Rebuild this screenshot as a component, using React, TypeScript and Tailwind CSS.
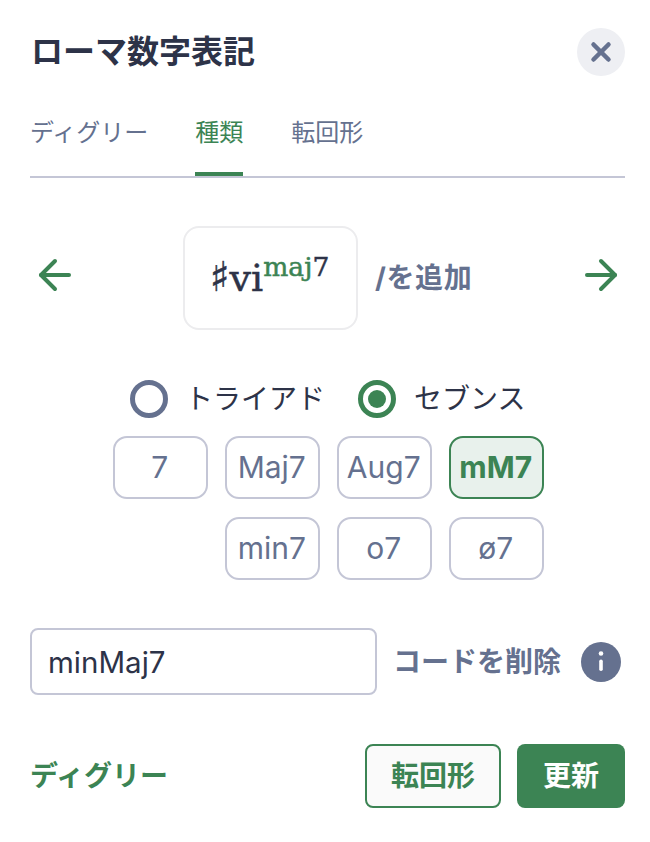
import { ArrowLeft, ArrowRight, X } from "lucide-react";

const chips = ["7", "Maj7", "Aug7", "mM7", "min7", "o7", "ø7"];

function Radio({ label, checked }: { label: string; checked?: boolean }) {
  return (
    <label className={checked ? "flex items-center gap-[18px]" : "flex items-center gap-[17px]"}>
      {checked ? (
        <span className="grid size-[38px] place-items-center rounded-full border-[5px] border-[#3c8454]">
          <span className="size-[18px] rounded-full bg-[#3c8454]" />
        </span>
      ) : (
        <span className="size-[38px] rounded-full border-[5px] border-[#65718f]" />
      )}
      <span className="text-[28px] leading-[40px] text-[#2d3348]">{label}</span>
    </label>
  );
}

export default function App() {
  return (
    <div className="h-[842px] w-[650px] bg-white pl-[30px] pr-[25px] font-['Inter','Noto_Sans_CJK_JP',sans-serif]">
      {/* Header */}
      <div className="flex items-center justify-between pl-[1px] pt-[28px]">
        <h1 className="text-[32px] font-bold leading-[48px] text-[#2d3348]">ローマ数字表記</h1>
        <button className="grid size-[48px] place-items-center rounded-full bg-[#eeeff3] text-[#65718f]">
          <X className="size-[30px]" strokeWidth={3.6} />
        </button>
      </div>

      {/* Tabs */}
      <div className="mt-[32px] flex border-b-2 border-[#c4c6d6] text-[24px] leading-[36px] text-[#65718f]">
        <div className="h-[68px] pt-[7px]">ディグリー</div>
        <div className="ml-[47px] h-[68px] border-b-4 border-[#3c8454] pt-[7px] text-[#3c8454]">種類</div>
        <div className="ml-[48px] h-[68px] pt-[7px]">転回形</div>
      </div>

      {/* Chord preview */}
      <div className="mt-[48px] flex items-center">
        <ArrowLeft className="mb-[6px] ml-[1px] size-[48px] text-[#3c8454]" strokeWidth={2} />
        <div className="ml-[104px] flex h-[104px] w-[175px] justify-center rounded-[16px] border-2 border-[#ececee] pr-[2px] pt-[24px] font-['DejaVu_Serif',serif] text-[#2d3348] [-webkit-text-stroke:0.5px]">
          <span className="text-[38px] leading-[52px]">
            <span className="text-[41px] leading-[40px]">♯</span>vi
          </span>
          <span className="text-[26.5px] leading-[30px]">
            <span className="text-[#3c8454]">maj</span>7
          </span>
        </div>
        <div className="ml-[17px] text-[28px] font-bold leading-[40px] tracking-[0.6px] text-[#65718f]">/を追加</div>
        <ArrowRight className="mb-[6px] ml-auto size-[48px] text-[#3c8454]" strokeWidth={2} />
      </div>

      {/* Triad / seventh */}
      <div className="ml-[100px] mt-[49px] flex gap-[33px]">
        <Radio label="トライアド" />
        <Radio label="セブンス" checked />
      </div>

      {/* Chord quality chips */}
      <div className="ml-[83px] mt-[17px] grid w-[431px] grid-cols-[repeat(4,94.5px)] gap-x-[17.5px] gap-y-[17.5px] text-[30px]">
        {chips.map((c, i) => (
          <div
            key={c}
            className={
              c === "mM7"
                ? "grid h-[63px] place-items-center rounded-[14px] border-2 border-[#3c8454] bg-[#e8f1ec] pr-[1px] font-bold text-[#3c8454]"
                : i === 4
                  ? "col-start-2 grid h-[63px] place-items-center rounded-[14px] border-2 border-[#c4c6d6] pr-[1px] text-[#65718f]"
                  : "grid h-[63px] place-items-center rounded-[14px] border-2 border-[#c4c6d6] pr-[1px] text-[#65718f]"
            }
          >
            {c}
          </div>
        ))}
      </div>

      {/* Input row */}
      <div className="mt-[48.5px] flex items-center">
        <input
          readOnly
          value="minMaj7"
          className="h-[67px] w-[347px] rounded-[8px] border-2 border-[#c4c6d6] px-[16px] text-[29.5px] text-[#2d3348] outline-none"
        />
        <span className="ml-[16px] whitespace-nowrap text-[28px] font-bold leading-[40px] text-[#65718f]">コードを削除</span>
        <svg viewBox="0 0 40 40" className="ml-[20px] size-[40px] shrink-0">
          <circle cx="20" cy="20" r="20" fill="#65718f" />
          <circle cx="20" cy="11.5" r="2.3" fill="#fff" />
          <rect x="18.2" y="17.5" width="3.6" height="11.5" rx="1.8" fill="#fff" />
        </svg>
      </div>

      {/* Footer */}
      <div className="mt-[49px] flex items-center">
        <span className="text-[28px] font-bold leading-[40px] text-[#3c8454]">ディグリー</span>
        <button className="ml-auto h-[64px] w-[136px] rounded-[8px] border-2 border-[#3c8454] bg-[#fafafa] text-[28px] font-bold text-[#3c8454]">
          転回形
        </button>
        <button className="ml-[16px] h-[64px] w-[108px] rounded-[8px] bg-[#3c8454] text-[28px] font-bold text-white">
          更新
        </button>
      </div>
    </div>
  );
}
